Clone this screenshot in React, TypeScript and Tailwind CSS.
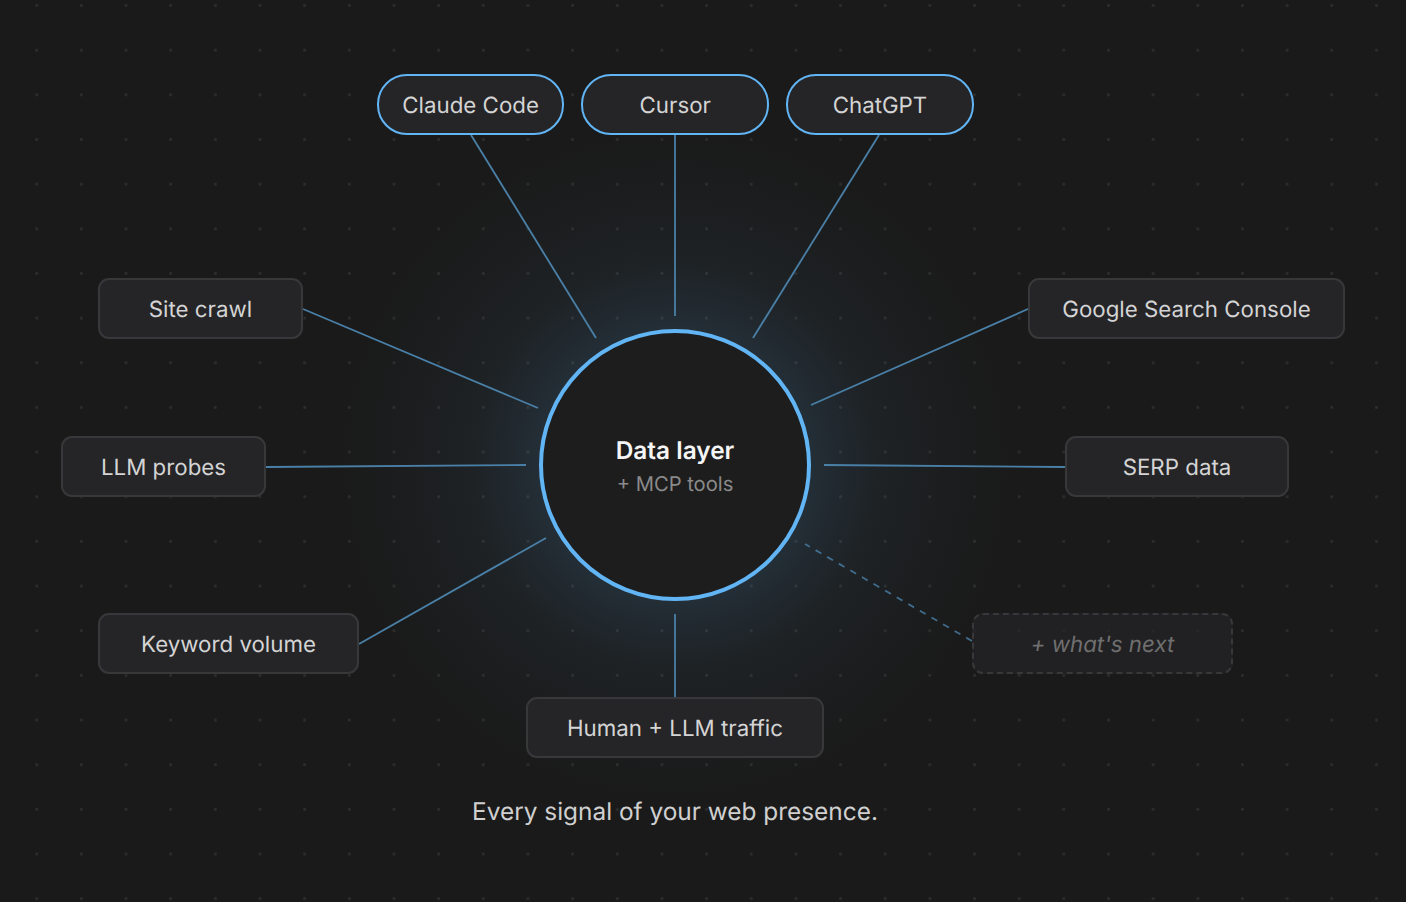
const lines = [
  'M471 135L596 338',
  'M675 135L675 316',
  'M879 135L753 338',
  'M303 309L538 408',
  'M266 467L526 465',
  'M359 644L546 538',
  'M675 698L675 614',
  'M1028 309L811 405',
  'M1065 467L824 465',
];

function Pill({ label }: { label: string }) {
  return (
    <div className="w-[187.6px] h-[61px] pt-[2px] flex items-center justify-center rounded-[30px] border-2 border-[#62b5f5] bg-[#252528] text-[22.3px] text-[#d4d4d4]">
      {label}
    </div>
  );
}

function Node({ label, className }: { label: string; className: string }) {
  return (
    <div className={`absolute h-[61px] pt-[2px] flex items-center justify-center rounded-[11px] border-2 border-[#38383a] bg-[#252528] text-[22.3px] text-[#d4d4d4] ${className}`}>
      {label}
    </div>
  );
}

export default function App() {
  return (
    <div className="relative w-[1406px] h-[902px] overflow-hidden bg-[#1a1a1a] font-['Inter',sans-serif] antialiased [text-rendering:geometricPrecision]">
      {/* dot grid */}
      <div className="absolute inset-0 bg-[radial-gradient(circle,#2d2d2d_1px,transparent_2px)] bg-[length:44.67px_44.67px] bg-[position:14.4px_-16.8px]" />
      {/* glow behind the hub */}
      <div className="absolute left-[325px] top-[115px] w-[700px] h-[700px] rounded-full bg-[radial-gradient(circle_closest-side,rgba(100,181,245,0.13)_135px,rgba(100,181,245,0.055)_200px,rgba(100,181,245,0.018)_270px,transparent_340px)]" />

      <svg className="absolute inset-0" width="1406" height="902" fill="none">
        {lines.map(d => (
          <path key={d} d={d} stroke="#4a80a8" strokeWidth="1.8" />
        ))}
        <path d="M972 641L805 544" stroke="#4a80a8" strokeOpacity="0.8" strokeWidth="1.8" strokeDasharray="6.7 6.7" />
      </svg>

      {/* clients */}
      <div className="absolute left-[376.8px] top-[74px] flex gap-[17.1px]">
        <Pill label="Claude Code" />
        <Pill label="Cursor" />
        <Pill label="ChatGPT" />
      </div>

      {/* sources */}
      <Node label="Site crawl" className="left-[98px] top-[278px] w-[205px]" />
      <Node label="LLM probes" className="left-[61px] top-[436px] w-[205px]" />
      <Node label="Keyword volume" className="left-[98px] top-[613px] w-[261px]" />
      <Node label="Human + LLM traffic" className="left-[526px] top-[697px] w-[298px]" />
      <Node label="Google Search Console" className="left-[1028px] top-[278px] w-[317px]" />
      <Node label="SERP data" className="left-[1065px] top-[436px] w-[224px]" />

      <div className="absolute left-[972px] top-[613px] w-[261px] h-[61px] pt-[2px] flex items-center justify-center rounded-[11px] border-2 border-dashed border-[#38383a] bg-[#252528]/70 text-[22.3px] italic text-[#6f6f6f]">
        + what's next
      </div>

      {/* hub */}
      <div className="absolute left-[539px] top-[329px] w-[272px] h-[272px] pt-[3px] flex flex-col items-center justify-center rounded-full border-4 border-[#62b5f5] bg-[#1d1d1e]">
        <div className="text-[24.4px] leading-[30px] font-semibold text-[#f5f5f5]">Data layer</div>
        <div className="mt-[4px] text-[20.2px] leading-[30px] text-[#8a8a8a]">+ MCP tools</div>
      </div>

      <div className="absolute left-0 top-[795px] w-[1350px] text-center text-[24.4px] leading-[32px] text-[#d0d0d0]">
        Every signal of your web presence.
      </div>
    </div>
  );
}
